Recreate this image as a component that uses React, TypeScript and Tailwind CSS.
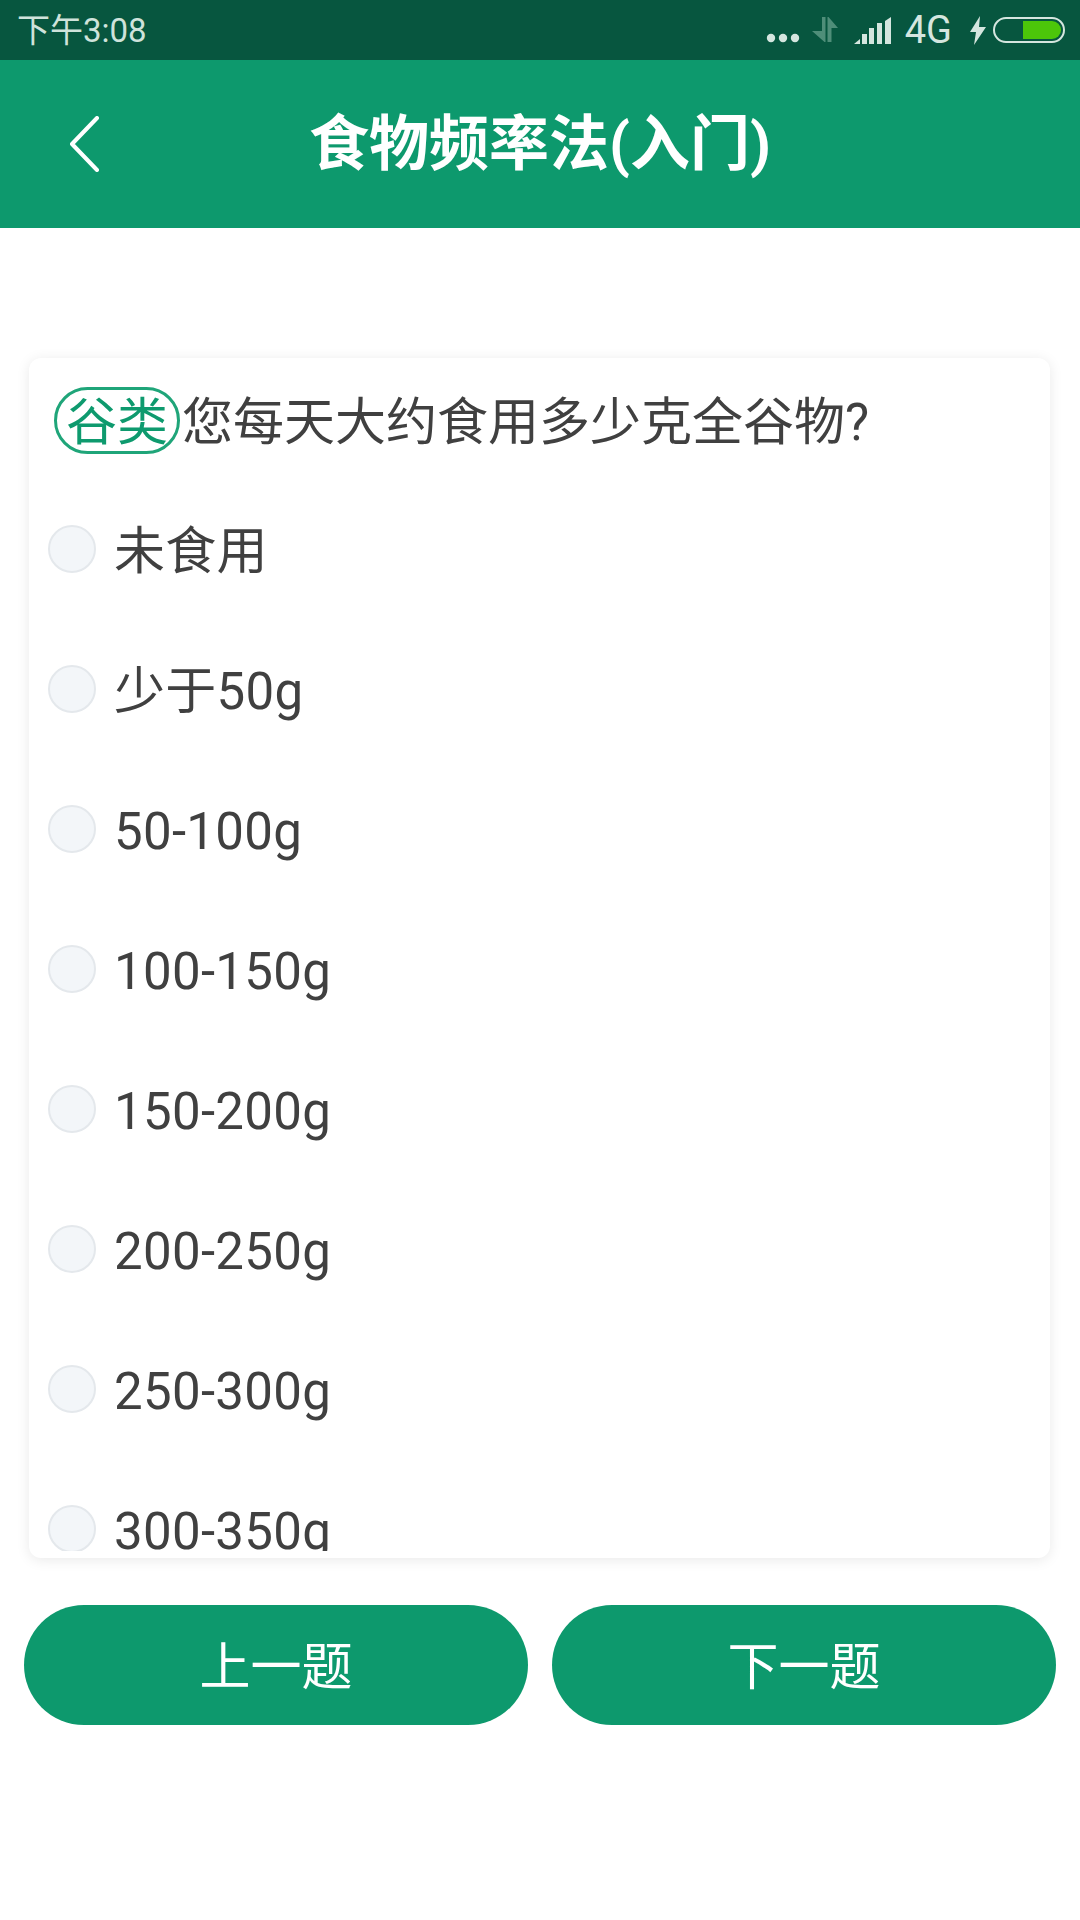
import React from 'react';

const options = ['未食用', '少于50g', '50-100g', '100-150g', '150-200g', '200-250g', '250-300g', '300-350g'];

function StatusIcons() {
  return (
    <div className="flex items-center">
      <svg width="34" height="10" viewBox="0 0 34 10" className="mt-[16px] mr-[11px]" fill="#d5e6df">
        <circle cx="5" cy="5" r="4.2" />
        <circle cx="17" cy="5" r="4.2" />
        <circle cx="29" cy="5" r="4.2" />
      </svg>
      <svg width="28" height="26" viewBox="0 0 28 26" className="mr-[15px]" fill="#4f8e79">
        <path d="M11 0h3.500v25h-1L1 14h10z" />
        <path d="M16.500 0h1L27 11h-6.500v14H16.500z" />
      </svg>
      <svg width="38" height="27" viewBox="0 0 38 27" className="mr-[13px]" fill="#d5e6df">
        <path d="M0 27l6-5v5z" />
        <rect x="8" y="17" width="5" height="10" />
        <rect x="15" y="11" width="5" height="16" />
        <rect x="23" y="6" width="5" height="21" />
        <path d="M31 4l6-4v27h-6z" />
      </svg>
      <span className="text-[38px] leading-none text-[#d5e6df] mr-[18px]">4G</span>
      <svg width="16" height="29" viewBox="0 0 16 29" className="mr-[7px]" fill="#d5e6df">
        <path d="M10 0L0 16h6L4 29l12-18H9z" />
      </svg>
      <div className="w-[72px] h-[26px] rounded-full border-[2px] border-[#d5e6df] p-[2px] flex justify-end">
        <div className="w-[38px] h-full bg-[#4cc60a] rounded-r-full" />
      </div>
    </div>
  );
}

export default function App() {
  return (
    <div className="w-[1080px] h-[1920px] bg-white flex flex-col font-['Roboto','Noto_Sans_CJK_SC',sans-serif]">
      <div className="h-[60px] bg-[#07563f] flex items-center justify-between pl-[17px] pr-[15px]">
        <span className="text-[33px] leading-none text-[#cfe3db]">下午3:08</span>
        <StatusIcons />
      </div>

      <div className="h-[168px] bg-[#0d996d] grid grid-cols-[1fr_auto_1fr] items-center">
        <div className="pl-[68px]">
          <svg width="32" height="56" viewBox="0 0 32 56" fill="none" stroke="white" strokeWidth="4" strokeLinecap="round" strokeLinejoin="round">
            <path d="M29 2L4 28l25 26" />
          </svg>
        </div>
        <h1 className="text-[60px] leading-none font-bold text-white pt-[2px]">食物频率法(入门)</h1>
        <div />
      </div>

      <div className="pt-[130px] pl-[29px] pr-[30px]">
        <div className="h-[1200px] bg-white rounded-[12px] shadow-[0_2px_14px_rgba(0,0,0,0.09)] pb-[7px] flex flex-col">
          <div className="flex items-center pl-[25px] pt-[29px]">
            <span className="h-[67px] px-[9px] pt-[4px] flex items-center rounded-full border-[3px] border-[#1fa579] text-[#0e9a6e] text-[51px] leading-none">谷类</span>
            <span className="text-[51px] leading-none text-[#404040] mt-[4px] ml-[2px]">您每天大约食用多少克全谷物?</span>
          </div>
          <div className="flex-1 overflow-hidden mt-[71px] pl-[19px] flex flex-col gap-[92px]">
            {options.map((o) => (
              <div key={o} className="flex items-center gap-[18px] h-[48px] shrink-0">
                <div className="w-[48px] h-[48px] rounded-full bg-[#f3f6f9] border-[2px] border-[#e4e8ec]" />
                <span className="text-[51px] tracking-[0.3px] leading-none text-[#404040] mt-[5px]">{o}</span>
              </div>
            ))}
          </div>
        </div>
      </div>

      <div className="flex gap-[24px] px-[24px] mt-[47px]">
        <button className="flex-1 h-[120px] pt-[5px] rounded-full bg-[#0d996d] text-white text-[51px] leading-none">上一题</button>
        <button className="flex-1 h-[120px] pt-[5px] rounded-full bg-[#0d996d] text-white text-[51px] leading-none">下一题</button>
      </div>
    </div>
  );
}
